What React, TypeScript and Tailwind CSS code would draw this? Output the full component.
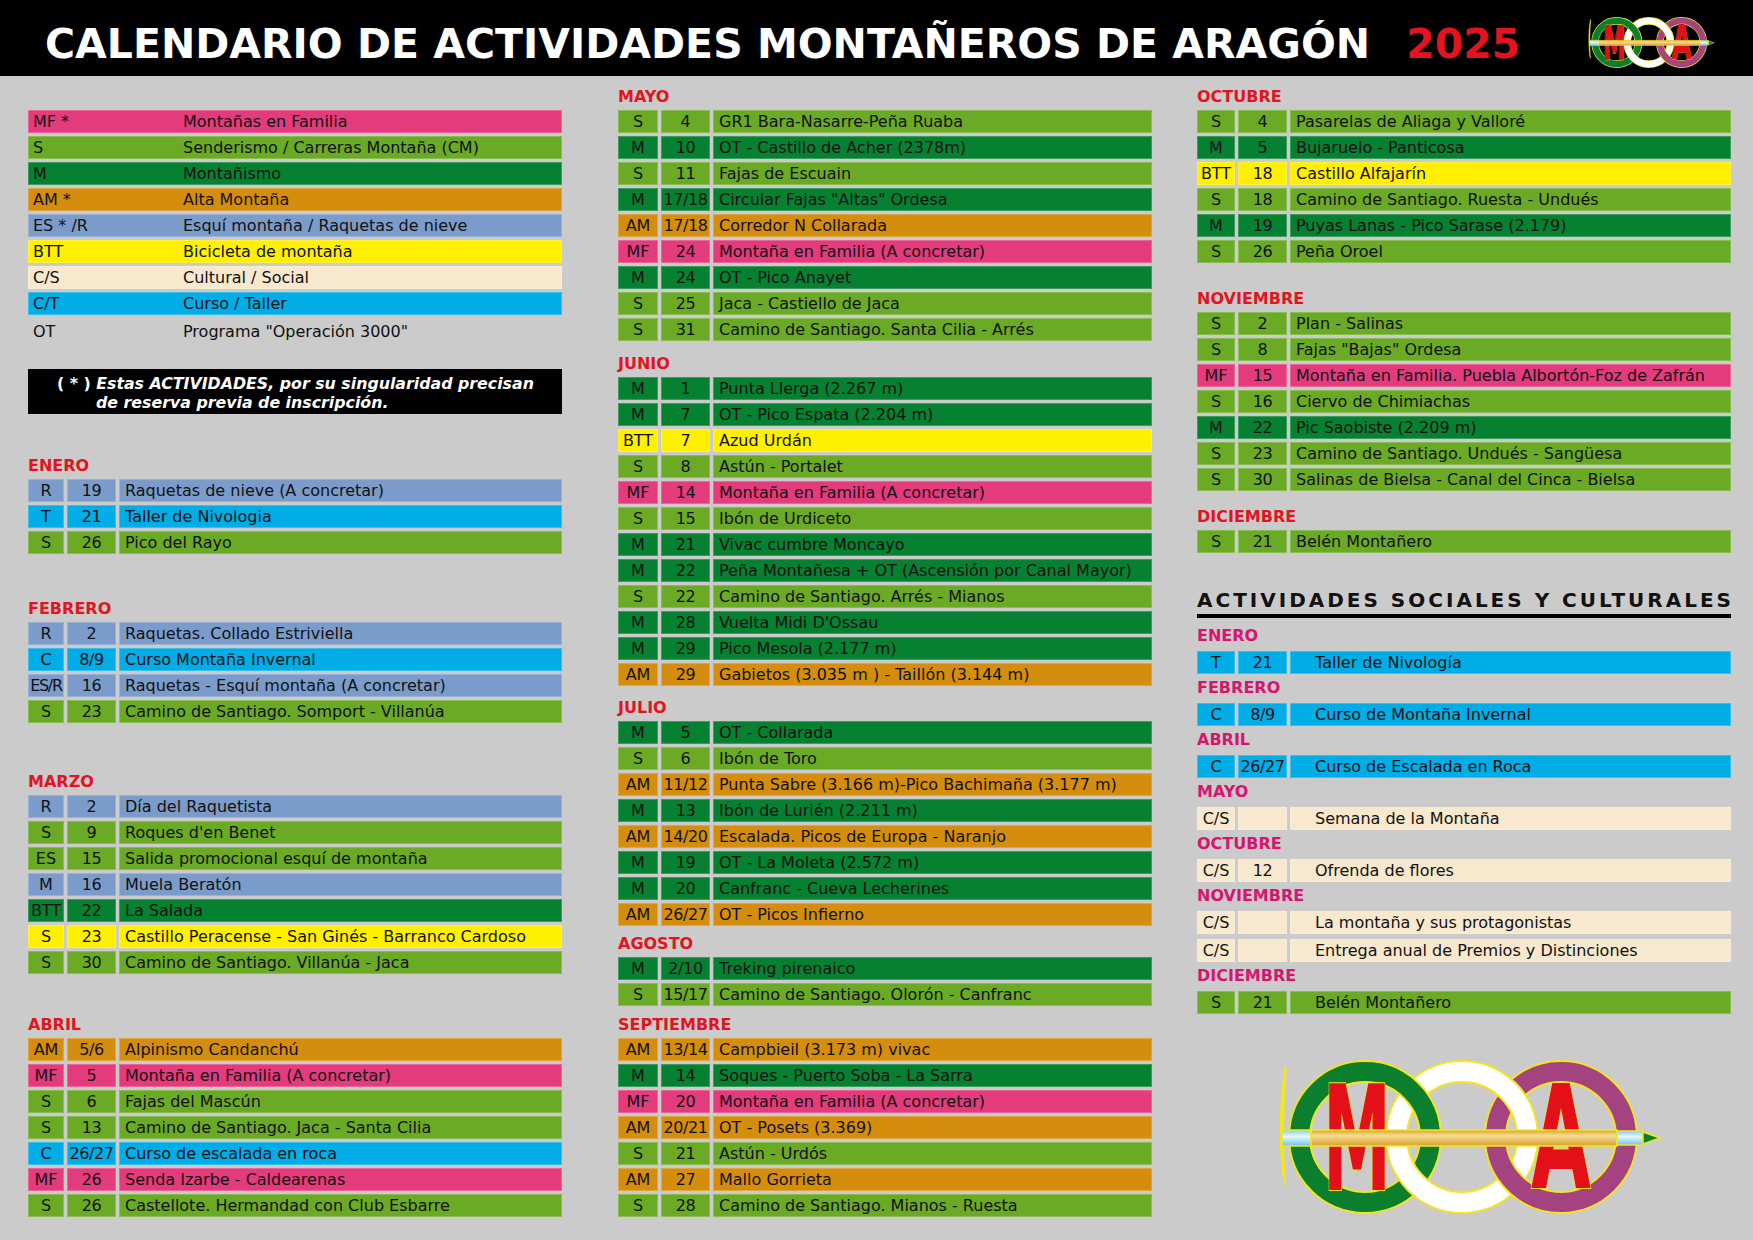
import React from 'react'

type Kind = 'mf' | 's' | 'm' | 'am' | 'es' | 'btt' | 'cs' | 'ct'

const BG: Record<Kind, string> = {
  mf: 'bg-[#e43b7d]',
  s: 'bg-[#6aaa25]',
  m: 'bg-[#058131]',
  am: 'bg-[#d48d0d]',
  es: 'bg-[#7b9ccb]',
  btt: 'bg-[#ffef00]',
  cs: 'bg-[#f8e8cd]',
  ct: 'bg-[#00ade7]',
}

type Act = [string, string, string, Kind]
type Month = { name: string; gap: string; rows: Act[] }

const legend: [string, string, Kind | null][] = [
  ['MF *', 'Montañas en Familia', 'mf'],
  ['S', 'Senderismo / Carreras Montaña (CM)', 's'],
  ['M', 'Montañismo', 'm'],
  ['AM *', 'Alta Montaña', 'am'],
  ['ES * /R', 'Esquí montaña / Raquetas de nieve', 'es'],
  ['BTT', 'Bicicleta de montaña', 'btt'],
  ['C/S', 'Cultural / Social', 'cs'],
  ['C/T', 'Curso / Taller', 'ct'],
]

const leftMonths: Month[] = [
  {
    name: 'ENERO',
    gap: 'mt-[42px]',
    rows: [
      ['R', '19', 'Raquetas de nieve (A concretar)', 'es'],
      ['T', '21', 'Taller de Nivologia', 'ct'],
      ['S', '26', 'Pico del Rayo', 's'],
    ],
  },
  {
    name: 'FEBRERO',
    gap: 'mt-[45px]',
    rows: [
      ['R', '2', 'Raquetas. Collado Estriviella', 'es'],
      ['C', '8/9', 'Curso Montaña Invernal', 'ct'],
      ['ES/R', '16', 'Raquetas - Esquí montaña (A concretar)', 'es'],
      ['S', '23', 'Camino de Santiago. Somport - Villanúa', 's'],
    ],
  },
  {
    name: 'MARZO',
    gap: 'mt-[49px]',
    rows: [
      ['R', '2', 'Día del Raquetista', 'es'],
      ['S', '9', "Roques d'en Benet", 's'],
      ['ES', '15', 'Salida promocional esquí de montaña', 's'],
      ['M', '16', 'Muela Beratón', 'es'],
      ['BTT', '22', 'La Salada', 'm'],
      ['S', '23', 'Castillo Peracense - San Ginés - Barranco Cardoso', 'btt'],
      ['S', '30', 'Camino de Santiago. Villanúa - Jaca', 's'],
    ],
  },
  {
    name: 'ABRIL',
    gap: 'mt-[41px]',
    rows: [
      ['AM', '5/6', 'Alpinismo Candanchú', 'am'],
      ['MF', '5', 'Montaña en Familia (A concretar)', 'mf'],
      ['S', '6', 'Fajas del Mascún', 's'],
      ['S', '13', 'Camino de Santiago. Jaca - Santa Cilia', 's'],
      ['C', '26/27', 'Curso de escalada en roca', 'ct'],
      ['MF', '26', 'Senda Izarbe - Caldearenas', 'mf'],
      ['S', '26', 'Castellote. Hermandad con Club Esbarre', 's'],
    ],
  },
]

const midMonths: Month[] = [
  {
    name: 'MAYO',
    gap: '',
    rows: [
      ['S', '4', 'GR1 Bara-Nasarre-Peña Ruaba', 's'],
      ['M', '10', 'OT - Castillo de Acher (2378m)', 'm'],
      ['S', '11', 'Fajas de Escuain', 's'],
      ['M', '17/18', 'Circular Fajas "Altas" Ordesa', 'm'],
      ['AM', '17/18', 'Corredor N Collarada', 'am'],
      ['MF', '24', 'Montaña en Familia (A concretar)', 'mf'],
      ['M', '24', 'OT - Pico Anayet', 'm'],
      ['S', '25', 'Jaca - Castiello de Jaca', 's'],
      ['S', '31', 'Camino de Santiago. Santa Cilia - Arrés', 's'],
    ],
  },
  {
    name: 'JUNIO',
    gap: 'mt-[13px]',
    rows: [
      ['M', '1', 'Punta Llerga (2.267 m)', 'm'],
      ['M', '7', 'OT - Pico Espata (2.204 m)', 'm'],
      ['BTT', '7', 'Azud Urdán', 'btt'],
      ['S', '8', 'Astún - Portalet', 's'],
      ['MF', '14', 'Montaña en Familia (A concretar)', 'mf'],
      ['S', '15', 'Ibón de Urdiceto', 's'],
      ['M', '21', 'Vivac cumbre Moncayo', 'm'],
      ['M', '22', 'Peña Montañesa + OT (Ascensión por Canal Mayor)', 'm'],
      ['S', '22', 'Camino de Santiago. Arrés - Mianos', 's'],
      ['M', '28', "Vuelta Midi D'Ossau", 'm'],
      ['M', '29', 'Pico Mesola (2.177 m)', 'm'],
      ['AM', '29', 'Gabietos (3.035 m ) - Taillón (3.144 m)', 'am'],
    ],
  },
  {
    name: 'JULIO',
    gap: 'mt-[12px]',
    rows: [
      ['M', '5', 'OT - Collarada', 'm'],
      ['S', '6', 'Ibón de Toro', 's'],
      ['AM', '11/12', 'Punta Sabre (3.166 m)-Pico Bachimaña (3.177 m)', 'am'],
      ['M', '13', 'Ibón de Lurién (2.211 m)', 'm'],
      ['AM', '14/20', 'Escalada. Picos de Europa - Naranjo', 'am'],
      ['M', '19', 'OT - La Moleta (2.572 m)', 'm'],
      ['M', '20', 'Canfranc - Cueva Lecherines', 'm'],
      ['AM', '26/27', 'OT - Picos Infierno', 'am'],
    ],
  },
  {
    name: 'AGOSTO',
    gap: 'mt-[8px]',
    rows: [
      ['M', '2/10', 'Treking pirenaico', 'm'],
      ['S', '15/17', 'Camino de Santiago. Olorón - Canfranc', 's'],
    ],
  },
  {
    name: 'SEPTIEMBRE',
    gap: 'mt-[9px]',
    rows: [
      ['AM', '13/14', 'Campbieil (3.173 m) vivac', 'am'],
      ['M', '14', 'Soques - Puerto Soba - La Sarra', 'm'],
      ['MF', '20', 'Montaña en Familia (A concretar)', 'mf'],
      ['AM', '20/21', 'OT - Posets (3.369)', 'am'],
      ['S', '21', 'Astún - Urdós', 's'],
      ['AM', '27', 'Mallo Gorrieta', 'am'],
      ['S', '28', 'Camino de Santiago. Mianos - Ruesta', 's'],
    ],
  },
]

const rightMonths: Month[] = [
  {
    name: 'OCTUBRE',
    gap: '',
    rows: [
      ['S', '4', 'Pasarelas de Aliaga y Valloré', 's'],
      ['M', '5', 'Bujaruelo - Panticosa', 'm'],
      ['BTT', '18', 'Castillo Alfajarín', 'btt'],
      ['S', '18', 'Camino de Santiago. Ruesta - Undués', 's'],
      ['M', '19', 'Puyas Lanas - Pico Sarase (2.179)', 'm'],
      ['S', '26', 'Peña Oroel', 's'],
    ],
  },
  {
    name: 'NOVIEMBRE',
    gap: 'mt-[26px]',
    rows: [
      ['S', '2', 'Plan - Salinas', 's'],
      ['S', '8', 'Fajas "Bajas" Ordesa', 's'],
      ['MF', '15', 'Montaña en Familia. Puebla Albortón-Foz de Zafrán', 'mf'],
      ['S', '16', 'Ciervo de Chimiachas', 's'],
      ['M', '22', 'Pic Saobiste (2.209 m)', 'm'],
      ['S', '23', 'Camino de Santiago. Undués - Sangüesa', 's'],
      ['S', '30', 'Salinas de Bielsa - Canal del Cinca - Bielsa', 's'],
    ],
  },
  {
    name: 'DICIEMBRE',
    gap: 'mt-[16px]',
    rows: [['S', '21', 'Belén Montañero', 's']],
  },
]

const social: { name: string; rows: Act[] }[] = [
  { name: 'ENERO', rows: [['T', '21', 'Taller de Nivología', 'ct']] },
  { name: 'FEBRERO', rows: [['C', '8/9', 'Curso de Montaña Invernal', 'ct']] },
  { name: 'ABRIL', rows: [['C', '26/27', 'Curso de Escalada en Roca', 'ct']] },
  { name: 'MAYO', rows: [['C/S', '', 'Semana de la Montaña', 'cs']] },
  { name: 'OCTUBRE', rows: [['C/S', '12', 'Ofrenda de flores', 'cs']] },
  {
    name: 'NOVIEMBRE',
    rows: [
      ['C/S', '', 'La montaña y sus protagonistas', 'cs'],
      ['C/S', '', 'Entrega anual de Premios y Distinciones', 'cs'],
    ],
  },
  { name: 'DICIEMBRE', rows: [['S', '21', 'Belén Montañero', 's']] },
]

const cell = 'h-[23px] leading-[23px] shadow-[inset_0_0_0_1px_rgba(255,255,255,0.22)]'

function Row({ act, typeW, indent }: { act: Act; typeW: string; indent?: boolean }) {
  const [t, d, txt, k] = act
  return (
    <div className="flex gap-[3px]">
      <div className={`${cell} ${BG[k]} ${typeW} text-center overflow-hidden whitespace-nowrap ${t.length > 3 ? 'text-[16px] tracking-[-1.3px]' : ''}`}>
        {t}
      </div>
      <div className={`${cell} ${BG[k]} w-[49px] text-center tracking-tight`}>{d}</div>
      <div className={`${cell} ${BG[k]} flex-1 whitespace-nowrap overflow-hidden ${indent ? 'pl-[25px]' : 'pl-[6px]'}`}>
        {txt}
      </div>
    </div>
  )
}

function MonthBlock({ m, typeW }: { m: Month; typeW: string }) {
  return (
    <div className={`flex flex-col gap-[3px] ${m.gap}`}>
      <div className="h-[20px] leading-[20px] font-bold text-[#e2141f]">{m.name}</div>
      {m.rows.map((r, i) => (
        <Row key={i} act={r} typeW={typeW} />
      ))}
    </div>
  )
}

// Club logo: three linked rings, the M and A letters and an ice axe across
function Logo({ className, id }: { className?: string; id: string }) {
  const yel = '#f3e61f'
  const rings = [
    { cx: 90, c: '#0b7f2e' },
    { cx: 187, c: '#ffffff' },
    { cx: 286, c: '#a4437f' },
  ]
  return (
    <svg viewBox="0 -14 390 190" className={className} overflow="visible">
      <defs>
        <clipPath id={`${id}-g`}>
          <rect x="112" y="0" width="58" height="81" />
        </clipPath>
        <clipPath id={`${id}-w`}>
          <rect x="210" y="0" width="58" height="81" />
        </clipPath>
        <linearGradient id={`${id}-shaft`} x1="0" y1="0" x2="0" y2="1">
          <stop offset="0" stopColor="#d9a22c" />
          <stop offset="0.35" stopColor="#f6dc93" />
          <stop offset="1" stopColor="#d9a22c" />
        </linearGradient>
        <linearGradient id={`${id}-steel`} x1="0" y1="0" x2="0" y2="1">
          <stop offset="0" stopColor="#7fcdf0" />
          <stop offset="0.4" stopColor="#e6f7ff" />
          <stop offset="1" stopColor="#6cc3ec" />
        </linearGradient>
      </defs>
      {rings.map((r) => (
        <g key={r.cx}>
          <circle cx={r.cx} cy="81" r="65.5" fill="none" stroke={yel} strokeWidth="23" />
          <circle cx={r.cx} cy="81" r="65.5" fill="none" stroke={r.c} strokeWidth="19" />
        </g>
      ))}
      <g clipPath={`url(#${id}-g)`}>
        <circle cx="90" cy="81" r="65.5" fill="none" stroke={yel} strokeWidth="23" />
        <circle cx="90" cy="81" r="65.5" fill="none" stroke="#0b7f2e" strokeWidth="19" />
      </g>
      <g clipPath={`url(#${id}-w)`}>
        <circle cx="187" cy="81" r="65.5" fill="none" stroke={yel} strokeWidth="23" />
        <circle cx="187" cy="81" r="65.5" fill="none" stroke="#ffffff" strokeWidth="19" />
      </g>
      <text
        x="48"
        y="134"
        fontSize="146"
        fontWeight="bold"
        fontFamily="'DejaVu Sans', sans-serif"
        fill="#e3101a"
        stroke={yel}
        strokeWidth="2"
        paintOrder="stroke"
        textLength="68"
        lengthAdjust="spacingAndGlyphs"
      >
        M
      </text>
      <text
        x="256"
        y="132"
        fontSize="144"
        fontWeight="bold"
        fontFamily="'DejaVu Sans', sans-serif"
        fill="#e3101a"
        stroke={yel}
        strokeWidth="2"
        paintOrder="stroke"
        textLength="60"
        lengthAdjust="spacingAndGlyphs"
      >
        A
      </text>
      <path d="M10 12 C4 50 4 100 10 129 C8 96 8 50 11 12 Z" fill={yel} stroke={yel} strokeWidth="1.5" />
      <rect x="7" y="74" width="29" height="16" fill={`url(#${id}-steel)`} stroke={yel} strokeWidth="1.5" />
      <rect x="36" y="74" width="306" height="16" fill={`url(#${id}-shaft)`} stroke={yel} strokeWidth="1.5" />
      <rect x="342" y="75" width="26" height="14" fill={`url(#${id}-steel)`} stroke={yel} strokeWidth="1.5" />
      <path d="M368 76 L385 82 L368 88 Z" fill="#0b7f2e" stroke={yel} strokeWidth="1.5" />
    </svg>
  )
}

export default function App() {
  return (
    <div
      className="w-[1753px] h-[1240px] bg-[#cbcbcb] text-[16px] text-[#111] overflow-hidden"
      style={{ fontFamily: "'DejaVu Sans', Verdana, sans-serif" }}
    >
      {/* Header */}
      <header className="h-[76px] bg-black flex items-start">
        <h1 className="ml-[45px] mt-[24px] text-[41px] leading-[41px] font-bold text-white whitespace-nowrap">
          CALENDARIO DE ACTIVIDADES MONTAÑEROS DE ARAGÓN
          <span className="ml-[36px] text-[#e2141f]">2025</span>
        </h1>
        <Logo id="top" className="ml-auto mr-[37px] mt-[11px] w-[129px] h-[63px]" />
      </header>

      <main className="flex pt-[11px]">
        {/* Left column: legend + enero..abril */}
        <section className="ml-[28px] w-[534px] flex flex-col">
          <div className="mt-[23px] flex flex-col gap-[3px]">
            {legend.map(([t, txt, k]) => (
              <div key={t} className={`${cell} ${k ? BG[k] : ''} flex`}>
                <span className="w-[155px] pl-[5px]">{t}</span>
                <span>{txt}</span>
              </div>
            ))}
            <div className="h-[23px] leading-[23px] mt-[2px] flex">
              <span className="w-[155px] pl-[5px]">OT</span>
              <span>Programa "Operación 3000"</span>
            </div>
          </div>
          <div className="mt-[26px] h-[45px] bg-black text-white font-bold text-[15.8px] leading-[19px] pt-[5px] whitespace-nowrap">
            <div className="pl-[29px]">
              ( * ) <i>Estas ACTIVIDADES, por su singularidad precisan</i>
            </div>
            <div className="pl-[68px]">
              <i>de reserva previa de inscripción.</i>
            </div>
          </div>
          {leftMonths.map((m) => (
            <MonthBlock key={m.name} m={m} typeW="w-[36px]" />
          ))}
        </section>

        {/* Middle column */}
        <section className="ml-[56px] w-[534px] flex flex-col">
          {midMonths.map((m) => (
            <MonthBlock key={m.name} m={m} typeW="w-[40px]" />
          ))}
        </section>

        {/* Right column */}
        <section className="ml-[45px] w-[534px] flex flex-col">
          {rightMonths.map((m) => (
            <MonthBlock key={m.name} m={m} typeW="w-[38px]" />
          ))}

          <div className="mt-[35px]">
            <h2 className="text-[20px] leading-[24px] font-bold tracking-[3px] whitespace-nowrap">
              ACTIVIDADES SOCIALES Y CULTURALES
            </h2>
            <div className="mt-[2px] h-[4px] bg-black" />
          </div>

          <div className="mt-[8px] flex flex-col gap-[4px]">
            {social.map((s) => (
              <div key={s.name} className="flex flex-col gap-[5px]">
                <div className="h-[20px] leading-[20px] font-bold text-[#d6156f]">{s.name}</div>
                {s.rows.map((r, i) => (
                  <Row key={i} act={r} typeW="w-[38px]" indent />
                ))}
              </div>
            ))}
          </div>

          <Logo id="big" className="ml-[78px] mt-[28px] w-[390px] h-[190px]" />
        </section>
      </main>
    </div>
  )
}
